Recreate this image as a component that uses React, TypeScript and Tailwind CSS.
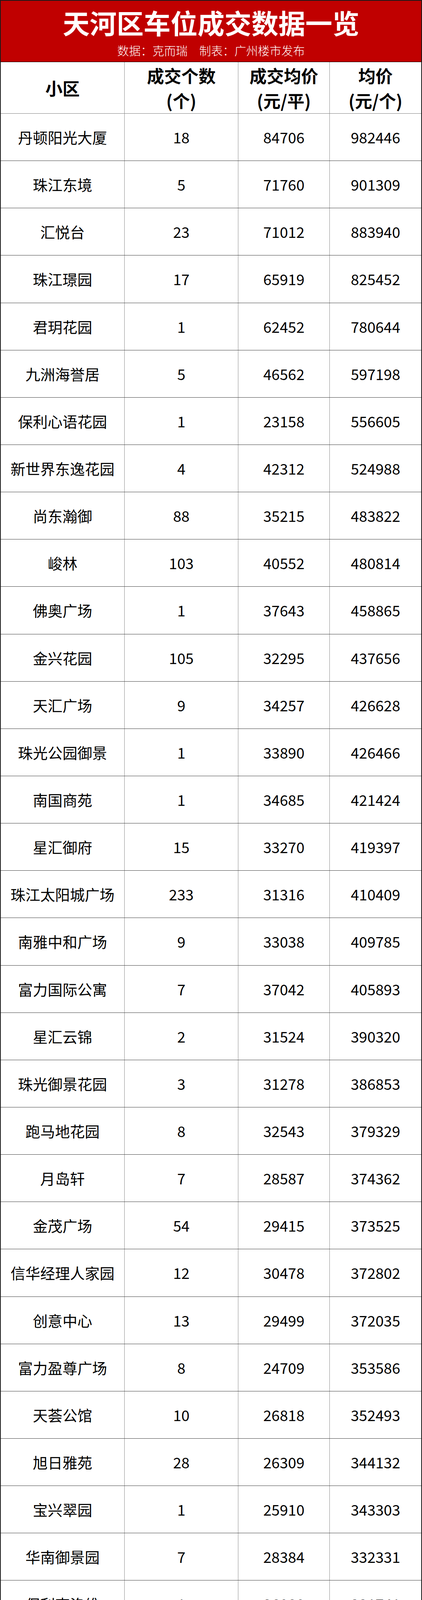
const rows: [string, number, number, number][] = [
  ["丹顿阳光大厦", 18, 84706, 982446],
  ["珠江东境", 5, 71760, 901309],
  ["汇悦台", 23, 71012, 883940],
  ["珠江璟园", 17, 65919, 825452],
  ["君玥花园", 1, 62452, 780644],
  ["九洲海誉居", 5, 46562, 597198],
  ["保利心语花园", 1, 23158, 556605],
  ["新世界东逸花园", 4, 42312, 524988],
  ["尚东瀚御", 88, 35215, 483822],
  ["峻林", 103, 40552, 480814],
  ["佛奥广场", 1, 37643, 458865],
  ["金兴花园", 105, 32295, 437656],
  ["天汇广场", 9, 34257, 426628],
  ["珠光公园御景", 1, 33890, 426466],
  ["南国商苑", 1, 34685, 421424],
  ["星汇御府", 15, 33270, 419397],
  ["珠江太阳城广场", 233, 31316, 410409],
  ["南雅中和广场", 9, 33038, 409785],
  ["富力国际公寓", 7, 37042, 405893],
  ["星汇云锦", 2, 31524, 390320],
  ["珠光御景花园", 3, 31278, 386853],
  ["跑马地花园", 8, 32543, 379329],
  ["月岛轩", 7, 28587, 374362],
  ["金茂广场", 54, 29415, 373525],
  ["信华经理人家园", 12, 30478, 372802],
  ["创意中心", 13, 29499, 372035],
  ["富力盈尊广场", 8, 24709, 353586],
  ["天荟公馆", 10, 26818, 352493],
  ["旭日雅苑", 28, 26309, 344132],
  ["宝兴翠园", 1, 25910, 343303],
  ["华南御景园", 7, 28384, 332331],
  ["保利克洛维", 1, 26080, 331741],
  ["财富世纪广场", 66, 25759, 328170],
  ["尚塬颐都汇", 1, 25082, 319040],
  ["富力盈通大厦", 3, 24976, 301708],
  ["富力盈丰大厦", 1, 23715, 301656],
  ["兰亭盛荟", 42, 23620, 299292],
  ["保利中宇广场", 5, 20176, 294792],
  ["东荣翰林苑", 11, 22551, 289434],
  ["广东农信大厦", 1, 22581, 287229],
  ["天河星作", 7, 21815, 286269],
  ["广州珠江花城", 23, 22380, 283100],
  ["天健上城", 317, 22160, 277544],
  ["富力万科云启", 15, 21276, 269698],
  ["勤天大厦", 3, 21947, 265560],
  ["汇峰苑", 1, 19630, 265000],
  ["高德置地广场", 1, 21989, 260355],
  ["富力盈盛广场", 2, 20220, 257200],
  ["金地·天河公馆", 7, 20682, 255986],
  ["华润天合", 146, 20007, 253724],
  ["富力盈隆广场", 1, 20327, 251239],
];

export default function App() {
  return (
    <div className="w-[1080px] h-[6470px] flex flex-col border-2 border-[#1a1a1a] bg-white font-['Noto_Sans_CJK_SC',sans-serif] text-black">
      {/* title */}
      <div className="h-[157px] shrink-0 bg-[#c00000] border-b border-black flex flex-col items-center text-white">
        <div className="mt-[10px] text-[69px] font-bold leading-[90px]">天河区车位成交数据一览</div>
        <div className="mt-[6px] text-[30px] font-light leading-[40px] whitespace-pre">
          数据：克而瑞　制表：广州楼市发布
        </div>
      </div>

      {/* column heads */}
      <div className="h-[132px] shrink-0 grid grid-cols-[316px_291px_234px_1fr] border-b border-[#7f7f7f] text-[44px] font-bold leading-[64px]">
        <div className="flex items-center justify-center">小区</div>
        <div className="flex flex-col items-center justify-center border-l border-[#8c8c8c]">
          <span>成交个数</span>
          <span>(个)</span>
        </div>
        <div className="flex flex-col items-center justify-center border-l border-[#8c8c8c]">
          <span>成交均价</span>
          <span>(元/平)</span>
        </div>
        <div className="flex flex-col items-center justify-center border-l border-[#8c8c8c]">
          <span>均价</span>
          <span>(元/个)</span>
        </div>
      </div>

      {/* rows */}
      <div className="flex-1 flex flex-col text-[38px] leading-none">
        {rows.map(([name, count, unit, avg]) => (
          <div
            key={name}
            className="flex-1 grid grid-cols-[316px_291px_234px_1fr] border-b border-[#404040] last:border-b-0"
          >
            <div className="flex items-center justify-center">{name}</div>
            <div className="flex items-center justify-center border-l border-[#8c8c8c]">{count}</div>
            <div className="flex items-center justify-center border-l border-[#8c8c8c]">{unit}</div>
            <div className="flex items-center justify-center border-l border-[#8c8c8c]">{avg}</div>
          </div>
        ))}
      </div>
    </div>
  );
}
